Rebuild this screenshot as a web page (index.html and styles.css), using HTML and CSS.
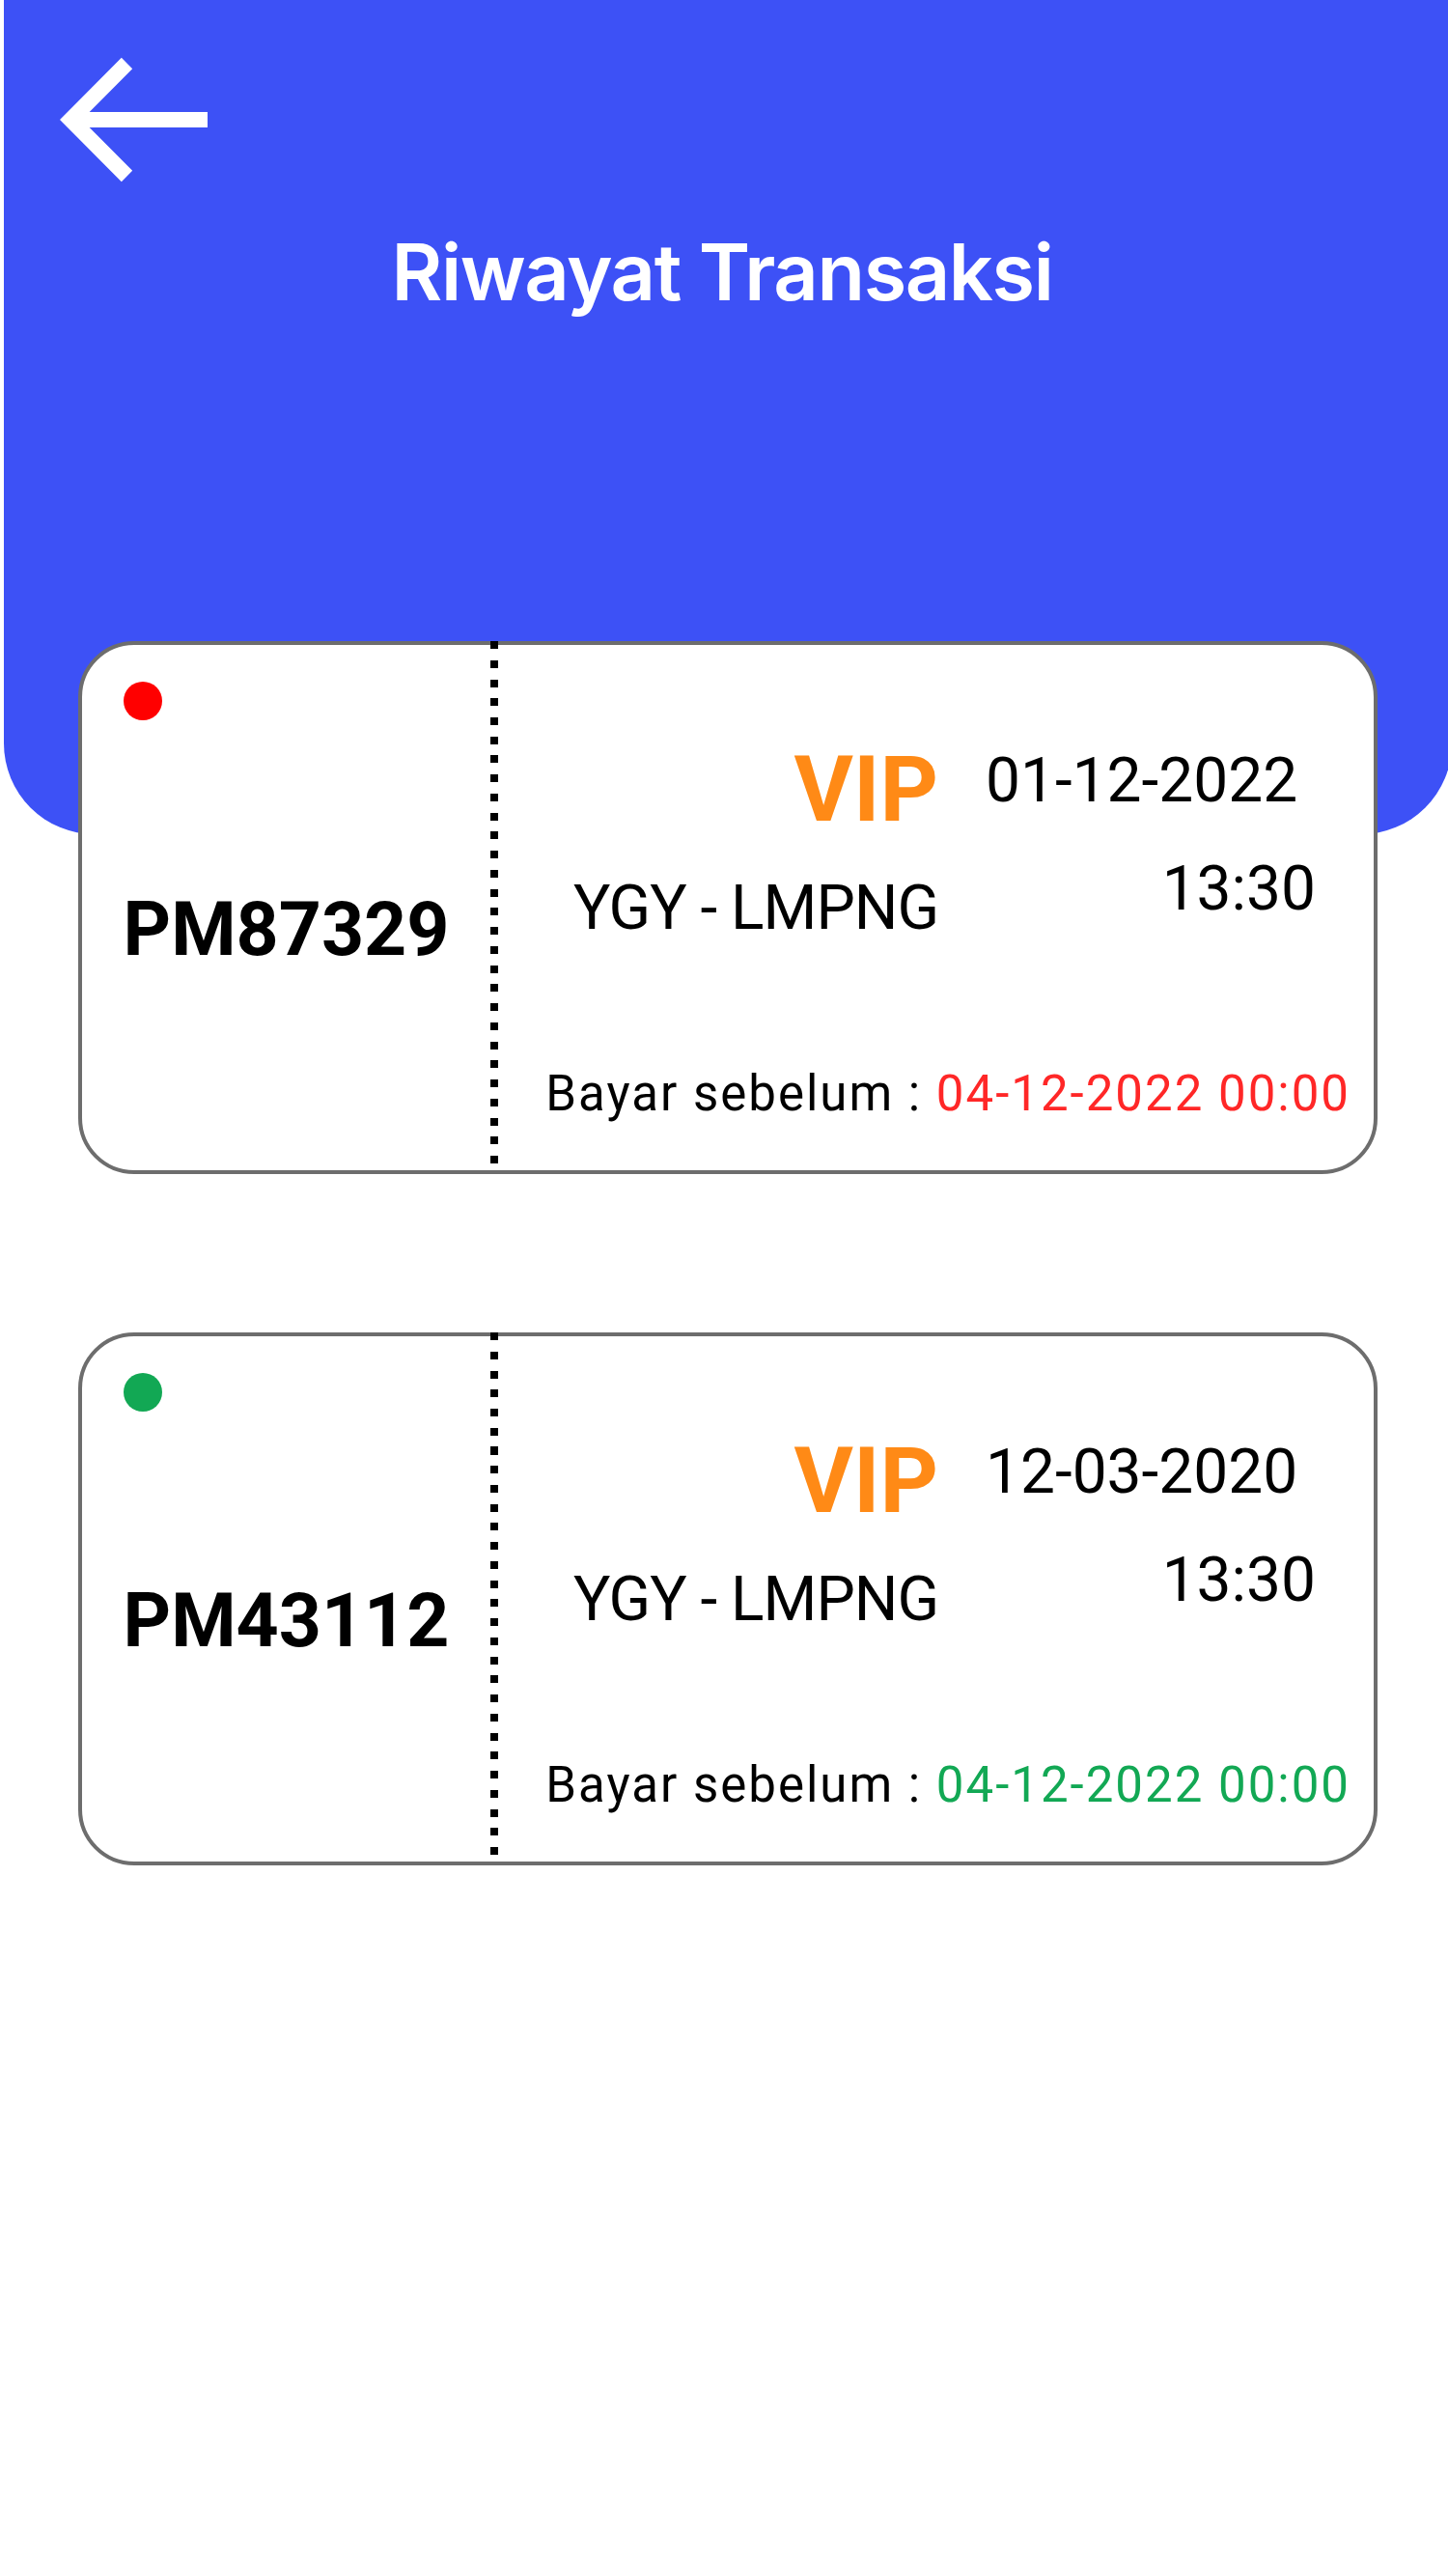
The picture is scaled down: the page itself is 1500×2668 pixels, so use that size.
FILE: index.html
```html
<!DOCTYPE html>
<html lang="id">
<head>
<meta charset="utf-8">
<title>Riwayat Transaksi</title>
<link rel="stylesheet" href="styles.css">
</head>
<body>
<div class="screen">
  <header class="app-header">
    <svg class="back-icon" viewBox="4 0 220 200" width="220" height="200" aria-label="Kembali">
      <path d="M131.5 65.5 L73.3 124 L131.5 182.5 M73.3 124 H215" fill="none" stroke="#fff" stroke-width="16" stroke-linejoin="miter" stroke-miterlimit="10"/>
    </svg>
    <h1 class="app-title">Riwayat Transaksi</h1>
  </header>

  <main class="ticket-list">
    <article class="ticket ticket--pending">
      <div class="ticket-stub">
        <span class="status-dot"></span>
        <div class="ticket-code">PM87329</div>
      </div>
      <div class="ticket-divider"></div>
      <div class="ticket-body">
        <div class="ticket-grid">
          <span class="ticket-class">VIP</span>
          <span class="ticket-date">01-12-2022</span>
          <span class="ticket-route">YGY - LMPNG</span>
          <span class="ticket-time">13:30</span>
        </div>
        <p class="ticket-deadline">Bayar sebelum : <span class="deadline-value">04-12-2022 00:00</span></p>
      </div>
    </article>

    <article class="ticket ticket--paid">
      <div class="ticket-stub">
        <span class="status-dot"></span>
        <div class="ticket-code">PM43112</div>
      </div>
      <div class="ticket-divider"></div>
      <div class="ticket-body">
        <div class="ticket-grid">
          <span class="ticket-class">VIP</span>
          <span class="ticket-date">12-03-2020</span>
          <span class="ticket-route">YGY - LMPNG</span>
          <span class="ticket-time">13:30</span>
        </div>
        <p class="ticket-deadline">Bayar sebelum : <span class="deadline-value">04-12-2022 00:00</span></p>
      </div>
    </article>
  </main>
</div>
</body>
</html>
```

FILE: styles.css
```css
html, body {
  margin: 0;
  padding: 0;
}

body {
  width: 1500px;
  height: 2668px;
  overflow: hidden;
  background: #ffffff;
  color: #000000;
  font-family: Roboto, "Noto Sans", "DejaVu Sans", sans-serif;
}

.screen {
  width: 1500px;
}

/* ---------- header ---------- */
.app-header {
  margin-left: 4px;
  width: 1500px;
  height: 864px;
  background: #3d51f6;
  border-radius: 0 0 94px 94px;
}

.back-icon {
  display: block;
}

.app-title {
  margin: 42px 0 0;
  padding-right: 12px;
  font-family: Inter, Roboto, sans-serif;
  font-weight: 600;
  font-size: 81px;
  line-height: 1;
  letter-spacing: -1.4px;
  color: #ffffff;
  text-align: center;
}

/* ---------- tickets ---------- */
.ticket-list {
  display: flex;
  flex-direction: column;
  gap: 164px;
  margin: -200px 73px 0 81px;
}

.ticket {
  display: flex;
  box-sizing: border-box;
  height: 552px;
  border: 4px solid #6d6d6d;
  border-radius: 58px;
  background: #ffffff;
}

.ticket-stub {
  width: 423px;
  display: flex;
  flex-direction: column;
  align-items: center;
}

.status-dot {
  align-self: flex-start;
  width: 40px;
  height: 40px;
  margin: 38px 0 0 43px;
  border-radius: 50%;
}

.ticket--pending .status-dot {
  background: #ff0000;
}

.ticket--paid .status-dot {
  background: #12a854;
}

.ticket-code {
  margin-top: 179px;
  font-weight: 700;
  font-size: 77px;
  line-height: 1;
}

.ticket-divider {
  width: 8px;
  margin: -4px 0;
  background: repeating-linear-gradient(to bottom, #000000 0 8px, transparent 8px 19.75px);
}

.ticket-body {
  flex: 1;
  display: flex;
  flex-direction: column;
  padding: 103px 0 54px;
}

.ticket-grid {
  display: grid;
  grid-template-columns: 1fr 342px;
  column-gap: 49px;
  row-gap: 24px;
  padding-right: 60px;
}

.ticket-class {
  justify-self: end;
  color: #ff8a16;
  font-weight: 700;
  font-size: 94px;
  line-height: 1;
}

.ticket-date {
  justify-self: start;
  margin-top: 6px;
  font-size: 64px;
  line-height: 1;
}

.ticket-route {
  justify-self: end;
  margin-top: 20px;
  font-size: 64px;
  line-height: 1;
  letter-spacing: -1px;
}

.ticket-time {
  justify-self: end;
  align-self: start;
  font-size: 64px;
  line-height: 1;
}

.ticket-deadline {
  margin: auto 24px 0 0;
  align-self: flex-end;
  font-size: 51px;
  line-height: 1;
  letter-spacing: 2px;
  white-space: nowrap;
}

.ticket--pending .deadline-value {
  color: #ff2727;
}

.ticket--paid .deadline-value {
  color: #12a854;
}
```
